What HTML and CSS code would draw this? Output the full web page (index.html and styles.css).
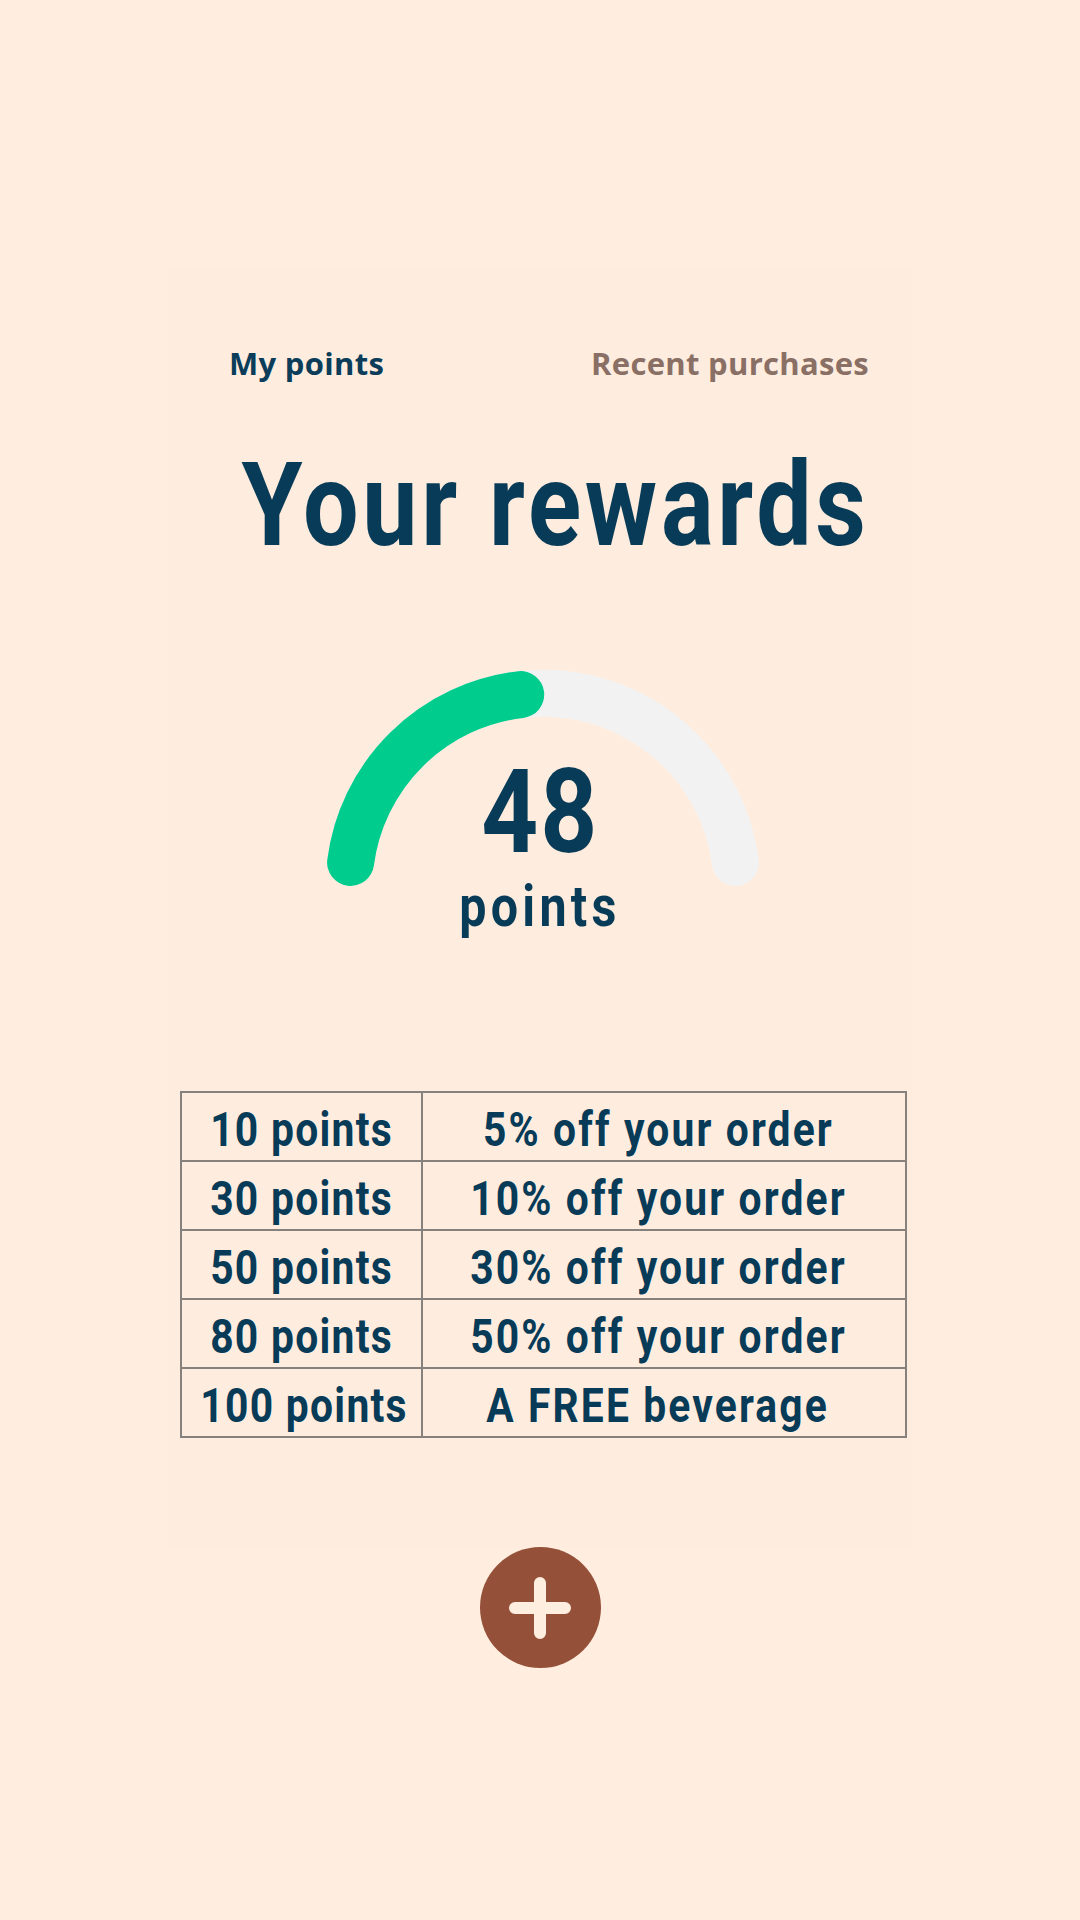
FILE: index.html
```html
<!DOCTYPE html>
<html lang="en">
<head>
<meta charset="utf-8">
<title>Your rewards</title>
<link rel="stylesheet" href="styles.css">
</head>
<body>
<main class="screen">
  <section class="panel">
    <nav class="tabs">
      <a class="tab tab-active">My points</a>
      <a class="tab tab-muted">Recent purchases</a>
    </nav>
    <h1 class="title"><span class="cond">Your rewards</span></h1>
    <div class="gauge">
      <svg class="gauge-svg" width="746" height="290" viewBox="0 0 746 290" aria-hidden="true">
        <path d="M183.6 203.4 A194 194 0 0 1 568.4 203.4" fill="none" stroke="#F2F2F2" stroke-width="47" stroke-linecap="round"/>
        <path d="M183.6 203.4 A194 194 0 0 1 568.4 203.4" fill="none" stroke="#00CC8E" stroke-width="47" stroke-linecap="round" pathLength="100" stroke-dasharray="46 200"/>
      </svg>
      <div class="gauge-label">
        <span class="gauge-value cond">48</span>
        <span class="gauge-unit cond">points</span>
      </div>
    </div>
    <table class="tiers">
      <colgroup><col class="col-pts"><col class="col-reward"></colgroup>
      <tr><td class="pts"><span class="cond">10 points</span></td><td class="reward"><span class="cond">5% off your order</span></td></tr>
      <tr><td class="pts"><span class="cond">30 points</span></td><td class="reward"><span class="cond">10% off your order</span></td></tr>
      <tr><td class="pts"><span class="cond">50 points</span></td><td class="reward"><span class="cond">30% off your order</span></td></tr>
      <tr><td class="pts"><span class="cond">80 points</span></td><td class="reward"><span class="cond">50% off your order</span></td></tr>
      <tr><td class="pts"><span class="cond">100 points</span></td><td class="reward"><span class="cond">A FREE beverage</span></td></tr>
    </table>
  </section>
  <button class="fab" aria-label="Add">
    <svg width="62" height="62" viewBox="0 0 62 62" aria-hidden="true">
      <path d="M6 31 H56 M31 6 V56" stroke="#FEEEDF" stroke-width="12" stroke-linecap="round" fill="none"/>
    </svg>
  </button>
</main>
</body>
</html>
```

FILE: styles.css
```css
html, body {
  margin: 0;
  padding: 0;
  background: #FFEEDF;
}

.screen {
  display: flex;
  flex-direction: column;
  align-items: center;
  width: 1080px;
  height: 1920px;
}

.panel {
  margin-top: 267px;
  width: 746px;
  height: 1280px;
  background: #FEEDDF;
  display: flex;
  flex-direction: column;
  padding-top: 76px;
  box-sizing: border-box;
}

.tabs {
  display: flex;
  justify-content: space-between;
  padding: 0 44px 0 62px;
}

.tab {
  font-family: "Open Sans", Lato, sans-serif;
  font-weight: 700;
  font-size: 31px;
  line-height: 40px;
  letter-spacing: 0.3px;
}

.tab-active { color: #0B3D5A; }
.tab-muted { color: #8A6F65; }

.cond {
  display: inline-block;
  white-space: nowrap;
  transform: scaleX(0.85);
  transform-origin: center;
}

.title {
  margin: 64px 0 0;
  padding-left: 31px;
  display: flex;
  justify-content: center;
  font-family: Roboto, "DejaVu Sans", sans-serif;
  font-weight: 700;
  font-size: 116px;
  line-height: 116px;
  letter-spacing: 4.3px;
  color: #083B57;
}

.gauge {
  margin-top: 96px;
  display: grid;
  height: 290px;
}

.gauge-svg, .gauge-label {
  grid-area: 1 / 1;
}

.gauge-label {
  display: flex;
  flex-direction: column;
  align-items: center;
  padding-top: 95px;
  font-family: Roboto, "DejaVu Sans", sans-serif;
  font-weight: 700;
  color: #083B57;
}

.gauge-value {
  font-size: 117px;
  line-height: 116px;
  letter-spacing: 2px;
}

.gauge-unit {
  margin-top: 8px;
  font-size: 57px;
  line-height: 57px;
  letter-spacing: 5px;
}

.tiers {
  margin: 142px 0 0 13px;
  width: 727px;
  table-layout: fixed;
  border-collapse: collapse;
  font-family: Roboto, "DejaVu Sans", sans-serif;
  font-weight: 700;
  font-size: 48px;
  color: #083B57;
}

.col-pts { width: 241px; }

.tiers td {
  border: 2px solid #86817C;
  padding: 7px 0 0;
  line-height: 60px;
  text-align: center;
  letter-spacing: 1.5px;
  overflow: visible;
}

.tiers td.reward {
  letter-spacing: 2.5px;
  padding-right: 12px;
}

.fab {
  width: 121px;
  height: 121px;
  border: 0;
  padding: 0;
  border-radius: 50%;
  background: #955039;
  display: flex;
  align-items: center;
  justify-content: center;
}
```
